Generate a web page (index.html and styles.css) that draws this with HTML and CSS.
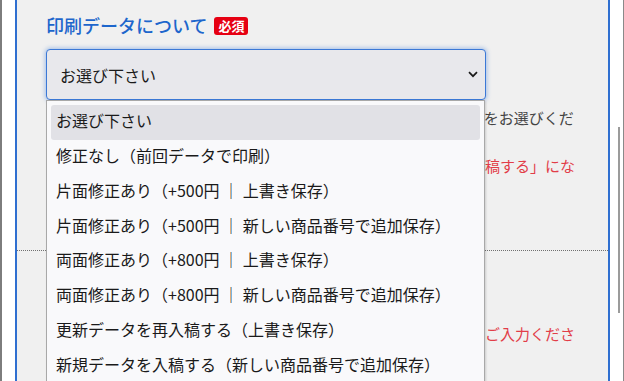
FILE: index.html
```html
<!DOCTYPE html>
<html lang="ja">
<head>
<meta charset="utf-8">
<title>印刷データについて</title>
<link rel="stylesheet" href="styles.css">
</head>
<body>
<div class="frame">
  <div class="panel">
    <section class="field">
      <h2 class="label">印刷データについて<span class="badge">必須</span></h2>
      <div class="select-wrap">
        <div class="select">
          <span>お選び下さい</span>
          <svg class="chevron" width="10" height="7" viewBox="0 0 10 7"><path d="M1 1.2 L5 5.2 L9 1.2" fill="none" stroke="#1a1a1a" stroke-width="1.7"/></svg>
        </div>
        <ul class="listbox">
          <li class="option selected">お選び下さい</li>
          <li class="option">修正なし（前回データで印刷）</li>
          <li class="option">片面修正あり（+500円 ｜ 上書き保存）</li>
          <li class="option">片面修正あり（+500円 ｜ 新しい商品番号で追加保存）</li>
          <li class="option">両面修正あり（+800円 ｜ 上書き保存）</li>
          <li class="option">両面修正あり（+800円 ｜ 新しい商品番号で追加保存）</li>
          <li class="option">更新データを再入稿する（上書き保存）</li>
          <li class="option">新規データを入稿する（新しい商品番号で追加保存）</li>
        </ul>
      </div>
      <p class="note first">ご注文の商品について、前回の印刷データの修正有無と保存方法をお選びください。</p>
      <p class="note red">※修正する時は「更新データを再入稿する」か「新規データを入稿する」になります。</p>
    </section>
    <hr class="divider">
    <section class="field">
      <h2 class="label">備考</h2>
      <p class="note red second">※ご要望や修正内容などがございましたら、こちらの備考欄にてご入力ください。</p>
    </section>
  </div>
  <div class="scroll-thumb"></div>
</div>
</body>
</html>
```
FILE: styles.css
```css
html, body {
  margin: 0;
  padding: 0;
  background: #ffffff;
  overflow: hidden;
}
body {
  font-family: "Noto Sans CJK JP", "Noto Sans", sans-serif;
  text-autospace: no-autospace;
  text-spacing-trim: space-all;
}
.frame {
  position: relative;
  display: flex;
  box-sizing: border-box;
  width: 624px;
  height: 381px;
  border-left: 2px solid #7d7d7d;
  border-right: 1px solid #8a8a8a;
  padding: 0 13px;
  background: #ffffff;
  overflow: hidden;
}
.panel {
  flex: 1;
  background: #f0f0f0;
  border-left: 2px solid #2f6fd0;
  border-right: 2px solid #2f6fd0;
}
.field {
  padding: 12px 29px 0;
}
.label {
  display: flex;
  align-items: center;
  margin: 0;
  font-size: 18px;
  line-height: 27px;
  font-weight: 500;
  color: #1d66cc;
}
.badge {
  display: inline-block;
  margin-left: 7px;
  padding: 0 4px;
  height: 18px;
  line-height: 18px;
  border-radius: 3px;
  background: #e60012;
  color: #ffffff;
  font-size: 13px;
  font-weight: 700;
}
.select-wrap {
  position: relative;
  width: 440px;
  margin-top: 10px;
}
.select {
  display: flex;
  align-items: center;
  justify-content: space-between;
  box-sizing: border-box;
  height: 51px;
  padding: 0 7px 0 13px;
  border: 1px solid #3b78d6;
  border-radius: 4px;
  background: #e8e8ec;
  color: #1a1a1a;
  font-size: 16px;
  box-shadow: 0 0 4px 1px rgba(70, 130, 220, 0.45);
}
.listbox {
  position: absolute;
  top: 100%;
  left: 0;
  z-index: 5;
  box-sizing: border-box;
  width: 439px;
  margin: 0;
  padding: 4px;
  list-style: none;
  background: #f9f9fb;
  border: 1px solid #a8a8a8;
  box-shadow: 1px 1px 2px rgba(0, 0, 0, 0.15);
}
.option {
  display: flex;
  align-items: center;
  box-sizing: border-box;
  height: 34.75px;
  padding: 0 5px 4px;
  border-radius: 3px;
  color: #1a1a1a;
  font-size: 16px;
  white-space: nowrap;
}
.option.selected {
  background: #e1e1e6;
}
.note {
  width: 525px;
  margin: 0;
  padding-left: 4px;
  font-size: 15px;
  line-height: 24px;
  color: #444444;
}
.note.first {
  margin-top: 6px;
}
.note.red {
  color: #e23d48;
}
.note.second {
  margin-top: 32px;
}
.divider {
  height: 0;
  margin: 48px 0 0;
  border: 0;
  border-top: 1px dotted #707070;
}
.scroll-thumb {
  position: absolute;
  top: 127px;
  right: 3px;
  width: 2px;
  height: 186px;
  background: #9b9b9b;
}
```
